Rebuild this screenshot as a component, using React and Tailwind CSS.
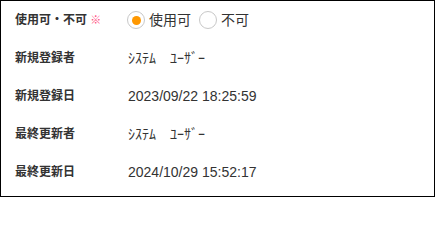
import React from "react";

const rows = [
  { label: "新規登録者", value: "ｼｽﾃﾑ　ﾕｰｻﾞｰ" },
  { label: "新規登録日", value: "2023/09/22 18:25:59" },
  { label: "最終更新者", value: "ｼｽﾃﾑ　ﾕｰｻﾞｰ" },
  { label: "最終更新日", value: "2024/10/29 15:52:17" },
];

const Radio = ({ checked, label }) => {
  return (
    <label className="flex items-center gap-[4px]">
      <span className="flex h-[18px] w-[18px] items-center justify-center rounded-full border border-[#c8c8c8] bg-white">
        {checked && <span className="h-[9px] w-[9px] rounded-full bg-[#ff9800]"></span>}
      </span>
      <span className="text-[14px] text-[#333]">{label}</span>
    </label>
  );
};

const App = () => {
  return (
    <div
      className="w-[435px] h-[197px] border border-black bg-white pb-[5px]"
      style={{ fontFamily: '"Liberation Sans", "Noto Sans CJK JP", sans-serif' }}
    >
      <div className="flex h-[38px] items-center pl-[14px]">
        <div className="w-[113px] text-[12px] font-bold text-[#333]">
          使用可・不可 <span className="text-[11px] font-normal text-[#ff4d82]">※</span>
        </div>
        <div className="flex items-center gap-[8px] -ml-[1px]">
          <Radio checked label="使用可" />
          <Radio label="不可" />
        </div>
      </div>
      {rows.map((r) => (
        <div key={r.label} className="flex h-[38px] items-center pl-[14px]">
          <div className="w-[113px] text-[12px] font-bold text-[#333]">{r.label}</div>
          <div className="text-[14px] text-[#333]">{r.value}</div>
        </div>
      ))}
    </div>
  );
};

export default App;
